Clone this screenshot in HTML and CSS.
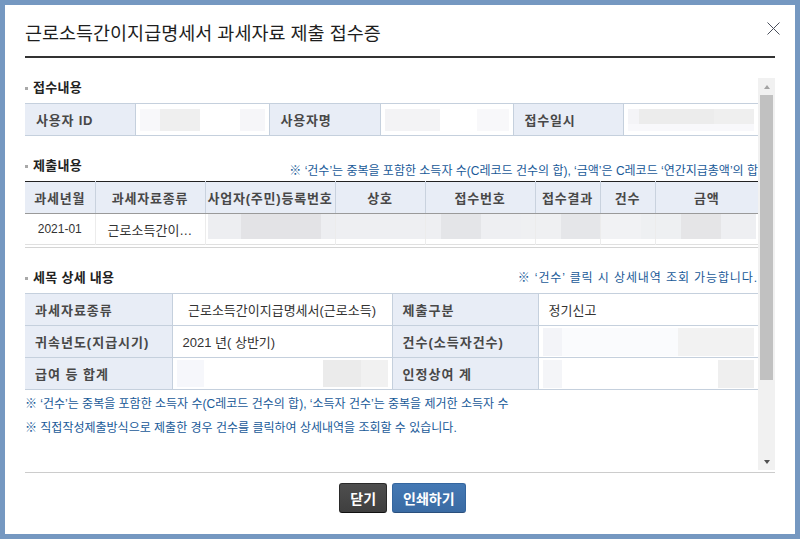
FILE: index.html
```html
<!DOCTYPE html>
<html lang="ko">
<head>
  <meta charset="UTF-8">
  <title>근로소득간이지급명세서 과세자료 제출 접수증</title>
  <link rel="stylesheet" href="styles.css">
</head>
<body>
  <div class="modal">
    <div class="modal-head">
      <h1>근로소득간이지급명세서 과세자료 제출 접수증</h1>
      <button type="button" class="close" aria-label="닫기">
        <svg width="13" height="13" viewBox="0 0 13 13"><path d="M0.5 0.5 L12.5 12.5 M12.5 0.5 L0.5 12.5" stroke="#4a4f5c" stroke-width="1" fill="none"/></svg>
      </button>
    </div>

    <div class="scroll-area">
      <div class="scroll-content">
        <!-- 접수내용 -->
        <h2 class="sec-title">접수내용</h2>
        <table class="info">
          <colgroup>
            <col style="width:110px"><col style="width:134px"><col style="width:111px">
            <col style="width:133px"><col style="width:110px"><col>
          </colgroup>
          <tr>
            <th>사용자 ID</th>
            <td class="masked"><span class="mask mask-a"></span></td>
            <th>사용자명</th>
            <td class="masked"><span class="mask mask-b"></span></td>
            <th>접수일시</th>
            <td class="masked"><span class="mask mask-c"></span></td>
          </tr>
        </table>

        <!-- 제출내용 -->
        <div class="sec-row">
          <h2 class="sec-title">제출내용</h2>
          <p class="note">※ ‘건수’는 중복을 포함한 소득자 수(C레코드 건수의 합), ‘금액’은 C레코드 ‘연간지급총액’의 합</p>
        </div>
        <div class="list-wrap">
          <table class="list">
            <colgroup>
              <col style="width:70px"><col style="width:110px"><col style="width:130px"><col style="width:90px">
              <col style="width:110px"><col style="width:65px"><col style="width:55px"><col>
            </colgroup>
            <thead>
              <tr>
                <th>과세년월</th>
                <th>과세자료종류</th>
                <th>사업자(주민)등록번호</th>
                <th>상호</th>
                <th>접수번호</th>
                <th>접수결과</th>
                <th>건수</th>
                <th>금액</th>
              </tr>
            </thead>
            <tbody>
              <tr>
                <td>2021-01</td>
                <td class="short" title="근로소득간이지급명세서">근로소득간이…</td>
                <td class="b3"></td>
                <td class="b4"></td>
                <td class="b5"></td>
                <td class="b6"></td>
                <td class="b7"></td>
                <td class="b8"></td>
              </tr>
            </tbody>
          </table>
        </div>

        <!-- 세목 상세 내용 -->
        <div class="sec-row mid">
          <h2 class="sec-title">세목 상세 내용</h2>
          <p class="note wide">※ ‘건수’ 클릭 시 상세내역 조회 가능합니다.</p>
        </div>
        <table class="info detail">
          <colgroup>
            <col style="width:147px"><col style="width:220px"><col style="width:146px"><col>
          </colgroup>
          <tr>
            <th>과세자료종류</th>
            <td class="center">근로소득간이지급명세서(근로소득)</td>
            <th>제출구분</th>
            <td>정기신고</td>
          </tr>
          <tr>
            <th>귀속년도(지급시기)</th>
            <td>2021 년( 상반기)</td>
            <th>건수(소득자건수)</th>
            <td class="masked"><span class="mask mask-d"></span></td>
          </tr>
          <tr>
            <th>급여 등 합계</th>
            <td class="masked"><span class="mask mask-e"></span></td>
            <th>인정상여 계</th>
            <td class="masked"><span class="mask mask-f"></span></td>
          </tr>
        </table>

        <p class="foot-note">※ ‘건수’는 중복을 포함한 소득자 수(C레코드 건수의 합), ‘소득자 건수’는 중복을 제거한 소득자 수</p>
        <p class="foot-note">※ 직접작성제출방식으로 제출한 경우 건수를 클릭하여 상세내역을 조회할 수 있습니다.</p>
      </div>

      <div class="scrollbar">
        <span class="sb-btn sb-up"></span>
        <span class="sb-track"><span class="sb-thumb"></span></span>
        <span class="sb-btn sb-down"></span>
      </div>
    </div>

    <div class="modal-foot">
      <button type="button" class="btn btn-dark">닫기</button>
      <button type="button" class="btn btn-blue">인쇄하기</button>
    </div>
  </div>
</body>
</html>
```

FILE: styles.css
```css
* {
  box-sizing: border-box;
}
body {
  margin: 0;
  padding: 5px;
  background: #7598c1;
  font-family: "Liberation Sans", "Noto Sans CJK KR", sans-serif;
  font-size: 12px;
  color: #333;
}
.modal {
  background: #fff;
  height: 529px;
  padding: 0 20px;
}
.modal-head {
  display: flex;
  justify-content: space-between;
  align-items: flex-start;
  padding: 17px 0 10px;
  border-bottom: 2px solid #333;
}
.modal-head h1 {
  margin: 0;
  font-size: 18.5px;
  line-height: 24px;
  font-weight: normal;
  color: #1e1e1e;
}
.close {
  border: 0;
  background: none;
  padding: 0;
  width: 13px;
  height: 13px;
  margin-right: -5px;
  cursor: pointer;
}
.close svg {
  display: block;
}

/* scroll area with its bar */
.scroll-area {
  display: flex;
  margin-top: 20px;
  height: 392px;
}
.scroll-content {
  flex: 1;
  overflow: hidden;
}
.scrollbar {
  width: 17px;
  display: flex;
  flex-direction: column;
  background: #f1f1f1;
}
.sb-btn {
  height: 17px;
  display: flex;
  align-items: center;
  justify-content: center;
}
.sb-btn::before {
  content: "";
  border-left: 3.5px solid transparent;
  border-right: 3.5px solid transparent;
}
.sb-up::before {
  border-bottom: 4px solid #a3a3a3;
}
.sb-down::before {
  border-top: 4px solid #505050;
}
.sb-track {
  flex: 1;
  padding: 0 2px;
}
.sb-thumb {
  display: block;
  height: 285px;
  background: #c1c1c1;
}

/* section titles */
.sec-title {
  margin: 0;
  padding-left: 8px;
  font-size: 13px;
  line-height: 20px;
  font-weight: bold;
  color: #222;
  letter-spacing: 0.3px;
  background: linear-gradient(#a9a9a9, #a9a9a9) 0 9px / 3px 3px no-repeat;
}
.sec-row {
  display: flex;
  justify-content: space-between;
  height: 24px;
  margin-top: 20px;
  margin-bottom: 1px;
}
.sec-row .note {
  align-self: flex-end;
}
.sec-row.mid {
  height: 20px;
  margin-bottom: 5px;
}
.sec-row.mid .note {
  align-self: center;
}
.note {
  margin: 0;
  color: #195a98;
  font-size: 12px;
  line-height: 18px;
}
.note.wide {
  letter-spacing: 0.9px;
}

/* tables */
table {
  width: 100%;
  border-collapse: collapse;
  table-layout: fixed;
}
.info {
  margin-top: 5px;
  border-top: 1px solid #c5d0dd;
}
.info th, .info td {
  height: 32px;
  padding: 0 10px;
  border: 1px solid #c5d0dd;
  text-align: left;
  font-size: 13px;
  color: #333;
}
.info th {
  background: #e8edf6;
  font-weight: bold;
  color: #484848;
  padding-left: 11px;
  letter-spacing: 0.8px;
}
.info tr > :first-child {
  border-left: 0;
}
.info tr > :last-child {
  border-right: 0;
}
.detail {
  margin-top: 0;
}
.detail th {
  padding-left: 10px;
  letter-spacing: 1px;
}
.info td.center {
  text-align: center;
  padding: 0 4px;
}
.info td.masked {
  padding: 0 4px;
}
.mask {
  display: block;
  height: 22px;
}
.mask-a {
  background: linear-gradient(90deg, #f8f8fa 0 16%, #efefef 16% 48%, #fff 48% 80%, #f6f6f9 80%);
}
.mask-b {
  background: linear-gradient(90deg, #f3f3f5 0 44%, #fff 44% 74%, #f8f8fa 74%);
}
.mask-c {
  background:
    linear-gradient(90deg, #f4f4f7 0 9%, #ececec 9% 68%, #efefef 68%) top / 100% 15px no-repeat,
    #f8f8fb;
}
.mask-d {
  height: 28px;
  background: linear-gradient(90deg, #f3f4f8 0 9%, #fafbfd 9% 64%, #f2f2f2 64%);
}
.mask-e {
  height: 27px;
  background: linear-gradient(90deg, #f6f7fb 0 13%, #fff 13% 69%, #ebebeb 69% 87%, #f1f1f1 87%);
}
.mask-f {
  height: 28px;
  background: linear-gradient(90deg, #f4f5f8 0 9%, #fff 9% 83%, #efefef 83%);
}

.list-wrap {
  padding-bottom: 2px;
  border-bottom: 1px solid #d4d4d4;
}
.list {
  border-top: 1px solid #222;
  border-bottom: 1px solid #e0e0e0;
}
.list th, .list td {
  height: 32px;
  padding: 0 10px;
  text-align: center;
  white-space: nowrap;
}
.list th {
  background: #e8edf6;
  font-size: 13px;
  font-weight: bold;
  color: #484848;
  padding: 0;
  letter-spacing: 0.8px;
  border-left: 1px solid #c9d2de;
  border-bottom: 1px solid #9a9a9a;
}
.list td {
  font-size: 12px;
  color: #333;
  border-left: 1px solid #ececec;
  height: 31px;
}
.list tr > :first-child {
  border-left: 0;
}
.list td.short {
  font-size: 13px;
}
.list td[class^="b"] {
  background-repeat: no-repeat;
  background-position: top left;
  background-size: 100% 25px;
}
.list .b3 {
  background-image: linear-gradient(90deg, #fff 0 2px, #edeef1 2px 35px, #e3e3e6 35px 115px, #edeef1 115px);
}
.list .b4 {
  background-image: linear-gradient(#eeeff2, #eeeff2);
}
.list .b5 {
  background-image: linear-gradient(90deg, #eeeff2 0 15px, #e4e5e8 15px 55px, #eeeff2 55px 95px, #eff0f2 95px);
}
.list .b6 {
  background-image: linear-gradient(90deg, #eff0f2 0 25px, #e5e6e9 25px);
}
.list .b7 {
  background-image: linear-gradient(90deg, #f1f2f4 0 40px, #eef0f2 40px);
}
.list .b8 {
  background-image: linear-gradient(90deg, #eef0f2 0 25px, #e5e5e7 25px 65px, #eeeff2 65px 100px, #fff 100px);
}

.foot-note {
  margin: 0;
  color: #195a98;
  font-size: 12px;
  line-height: 24px;
}
.detail + .foot-note {
  margin-top: 2px;
}

/* footer buttons */
.modal-foot {
  display: flex;
  justify-content: center;
  gap: 5px;
  margin-top: 2px;
  padding: 10px 0 0 5px;
  border-top: 1px solid #cccccc;
}
.btn {
  height: 30px;
  padding: 0 10px;
  border-radius: 3px;
  font-family: "Liberation Sans", "Noto Sans CJK KR", sans-serif;
  font-size: 14px;
  font-weight: bold;
  color: #fff;
  cursor: pointer;
}
.btn-dark {
  background: linear-gradient(#4e4e4e, #3f3f3f);
  border: 1px solid #2a2a2a;
  border-bottom-color: #111;
}
.btn-blue {
  background: linear-gradient(#4479b4, #3a6ba3);
  border: 1px solid #34669f;
  border-bottom-color: #2a4f7c;
}
```
